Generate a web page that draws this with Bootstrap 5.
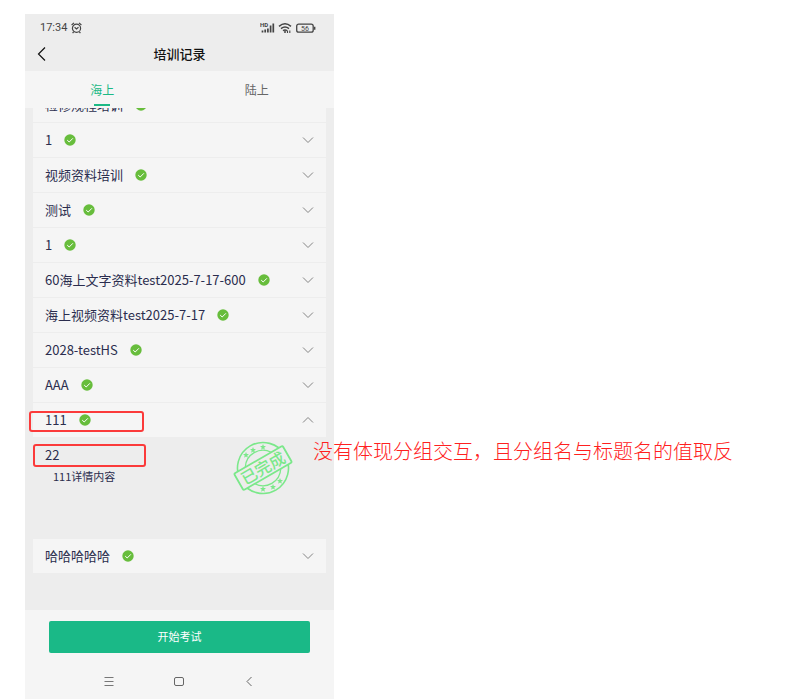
<!DOCTYPE html>
<html lang="zh-CN">
<head>
<meta charset="utf-8">
<meta name="viewport" content="width=device-width, initial-scale=1">
<title>培训记录</title>
<link href="https://cdn.jsdelivr.net/npm/bootstrap@5.3.0/dist/css/bootstrap.min.css" rel="stylesheet">
<style>
body{font-family:"Noto Sans CJK SC",sans-serif;background:#fff;color:#2b2d4e;font-size:12px;line-height:18px}
.page{min-height:100vh;padding:14px 25px 0}
.phone{max-width:309px;min-height:calc(100vh - 14px);background:#ededed}
.status{height:28px;padding:0 18px 0 15px;font-family:Roboto,sans-serif;font-size:11px;color:#444}
.title-bar{height:29px;padding-bottom:6px}
.title-bar h1{font-size:13px;line-height:20px;color:#111;font-weight:500}
.back{left:10px;top:2px;line-height:0}
.tabs{height:37px;background:#f5f5f5}
.tabs .nav-link{display:flex;flex-direction:column;align-items:center;justify-content:flex-start;color:#666;font-size:12px;line-height:18px;padding:10px 0 0;border:0;border-radius:0;background:none;height:37px}
.tabs .nav-link.active{color:#1cb985;background:none}
.tabs .nav-link.active::after{content:"";width:16px;height:2px;margin-top:5px;background:#1cb985}
.records{padding:0 8px}
.clip-top{height:15px}
.record{height:35px;padding:0 12px;background:#f5f5f5;color:#2b2d4e;border:0;border-bottom:1px solid #ededed;font-size:13px;line-height:20px}
.record .tick{margin-left:12px}
.detail{height:101px;padding:7px 12px}
.detail h2{font-size:13px;line-height:20px;font-weight:400}
.detail p{font-size:11px;line-height:18px;padding:2px 8px}
.stamp{right:32px;top:1px}
.mark-box{border:2px solid #fb3a3a;border-radius:3px;pointer-events:none}
.mark-group{left:-4px;top:8px;width:115px;height:21px}
.mark-title{left:0;top:6px;width:113px;height:23px}
.note{left:280px;top:0;font-size:20px;line-height:26px;font-weight:300;color:#ff2020;white-space:nowrap}
.footer-bar{background:#f5f5f5;padding:11px 24px 0;height:89px}
.start{height:32px;background:#1ab987;color:#fff;font-size:11px;line-height:16px;border:0;border-radius:2px;padding:0 0 2px}
.start:hover{background:#15a577;color:#fff}
.sys{height:55px;padding:0 55px 0 54px}
.sys button{line-height:0}
</style>
<script src="https://cdn.jsdelivr.net/npm/bootstrap@5.3.0/dist/js/bootstrap.bundle.min.js"></script>
</head>
<body>
<svg width="0" height="0" class="position-absolute" aria-hidden="true">
<symbol id="tick" viewBox="0 0 12 12"><circle cx="6" cy="6" r="5.7" fill="#67bd3c"/><path d="M3.2 6.1l2 1.9 3.7-3.7" fill="none" stroke="#fff" stroke-width="1"/></symbol>
<symbol id="down" viewBox="0 0 12 8"><path d="M1 1.500l5 5 5-5" fill="none" stroke="#858585" stroke-width="1"/></symbol>
<symbol id="up" viewBox="0 0 12 8"><path d="M1 6.500l5-5 5 5" fill="none" stroke="#858585" stroke-width="1"/></symbol>
<symbol id="star" viewBox="-5 -5 10 10"><path d="M0-5L1.4-1.6 5-1.5 2.2.8 3.1 4.4 0 2.4-3.1 4.4-2.2.8-5-1.5-1.4-1.6z" fill="#7be88a"/></symbol>
</svg>
<div class="page">
<main class="phone d-flex flex-column">
  <div class="status d-flex align-items-center">
    <span>17:34</span>
    <svg class="ms-1" width="11" height="12" viewBox="0 0 11 12" fill="none" stroke="#444" stroke-width="1.200" aria-hidden="true"><circle cx="5.5" cy="6.2" r="4.1"/><path d="M.6 3L3 .9M10.4 3L8 .9M2.6 9.8l-1 1.3M8.4 9.8l1 1.3M3.6 5.3l1.9 1.6 2-1.6"/></svg>
    <svg class="ms-auto" width="56" height="12" viewBox="0 0 56 12" aria-hidden="true">
      <text x="0" y="5" font-family="Roboto" font-size="6" font-weight="700" fill="#444">HD</text>
      <path d="M2.5 10.5v-2M5.2 10.5v-3M7.900 10.5v-4M10.6 10.5v-7M13.3 10.5v-9" stroke="#444" stroke-width="1.7"/>
      <g fill="none" stroke="#444" stroke-width="1.5"><path d="M19 4.3q6-5 12 0M21 6.6q4-3.2 8 0M23 8.700q2-1.6 4 0"/></g><circle cx="25" cy="10" r="1" fill="#444"/><path d="M27.5 8.5v2.5M29.8 11V8.5" stroke="#444" stroke-width="1.1"/>
      <rect x="36.7" y="2.2" width="16.5" height="8" rx="2" fill="none" stroke="#444" stroke-width="1.3"/><path d="M54.7 4.7v3" stroke="#444" stroke-width="1.4"/>
      <text x="45" y="8.8" text-anchor="middle" font-family="Roboto" font-size="7" fill="#444">56</text>
    </svg>
  </div>
  <header class="title-bar position-relative d-flex align-items-center justify-content-center">
    <button class="back btn p-0 border-0 position-absolute" aria-label="返回"><svg width="12" height="20" viewBox="0 0 12 20"><path d="M10 3.5L3.5 10l6.5 6.5" fill="none" stroke="#111" stroke-width="1.2"/></svg></button>
    <h1 class="m-0">培训记录</h1>
  </header>
  <nav class="tabs nav nav-justified" aria-label="培训类型">
    <button class="nav-link active" aria-current="true">海上</button>
    <button class="nav-link">陆上</button>
  </nav>
  <div class="records">
    <div class="clip-top overflow-hidden d-flex align-items-end"><button class="record d-flex align-items-center w-100"><span>检修规程培训</span><svg class="tick" width="12" height="12"><use href="#tick"/></svg><svg class="ms-auto" width="12" height="8"><use href="#down"/></svg></button></div>
    <button class="record d-flex align-items-center w-100"><span>1</span><svg class="tick" width="12" height="12"><use href="#tick"/></svg><svg class="ms-auto" width="12" height="8"><use href="#down"/></svg></button>
    <button class="record d-flex align-items-center w-100"><span>视频资料培训</span><svg class="tick" width="12" height="12"><use href="#tick"/></svg><svg class="ms-auto" width="12" height="8"><use href="#down"/></svg></button>
    <button class="record d-flex align-items-center w-100"><span>测试</span><svg class="tick" width="12" height="12"><use href="#tick"/></svg><svg class="ms-auto" width="12" height="8"><use href="#down"/></svg></button>
    <button class="record d-flex align-items-center w-100"><span>1</span><svg class="tick" width="12" height="12"><use href="#tick"/></svg><svg class="ms-auto" width="12" height="8"><use href="#down"/></svg></button>
    <button class="record d-flex align-items-center w-100"><span>60海上文字资料test2025-7-17-600</span><svg class="tick" width="12" height="12"><use href="#tick"/></svg><svg class="ms-auto" width="12" height="8"><use href="#down"/></svg></button>
    <button class="record d-flex align-items-center w-100"><span>海上视频资料test2025-7-17</span><svg class="tick" width="12" height="12"><use href="#tick"/></svg><svg class="ms-auto" width="12" height="8"><use href="#down"/></svg></button>
    <button class="record d-flex align-items-center w-100"><span>2028-testHS</span><svg class="tick" width="12" height="12"><use href="#tick"/></svg><svg class="ms-auto" width="12" height="8"><use href="#down"/></svg></button>
    <button class="record d-flex align-items-center w-100"><span>AAA</span><svg class="tick" width="12" height="12"><use href="#tick"/></svg><svg class="ms-auto" width="12" height="8"><use href="#down"/></svg></button>
    <div class="position-relative">
      <button class="record d-flex align-items-center w-100" data-bs-toggle="collapse" data-bs-target="#detail" aria-expanded="true" aria-controls="detail"><span>111</span><svg class="tick" width="12" height="12"><use href="#tick"/></svg><svg class="ms-auto" width="12" height="8"><use href="#up"/></svg></button>
      <div class="mark-box mark-group position-absolute"></div>
    </div>
    <div class="collapse show" id="detail">
      <div class="detail position-relative">
        <h2 class="m-0">22</h2>
        <p class="m-0">111详情内容</p>
        <svg class="stamp position-absolute" width="62" height="58" viewBox="0 0 62 58" role="img" aria-label="已完成">
          <g transform="translate(31 29) rotate(-30)">
            <g fill="none" stroke="#7be88a" stroke-width="1.6"><circle r="25.5"/><path d="M-15-9.500A17.800 17.800 0 0 1 15-9.500M-15 9.500A17.800 17.800 0 0 0 15 9.500" stroke-width="1.3"/></g>
            <rect x="-28" y="-9.5" width="56" height="19" rx="1.5" fill="#ededed" stroke="#7be88a" stroke-width="1.8"/>
            <text y="6" text-anchor="middle" font-family="Noto Sans CJK SC" font-size="16" font-weight="500" fill="#7be88a">已完成</text>
          </g>
          <use href="#star" x="11" y="13" width="6" height="6"/><use href="#star" x="18" y="8" width="6" height="6"/><use href="#star" x="28" y="5" width="6" height="6"/>
          <use href="#star" x="28" y="47" width="6" height="6"/><use href="#star" x="38" y="45" width="6" height="6"/><use href="#star" x="45" y="39" width="6" height="6"/>
        </svg>
        <div class="mark-box mark-title position-absolute"></div>
        <div class="note position-absolute">没有体现分组交互，且分组名与标题名的值取反</div>
      </div>
    </div>
    <button class="record d-flex align-items-center w-100"><span>哈哈哈哈哈</span><svg class="tick" width="12" height="12"><use href="#tick"/></svg><svg class="ms-auto" width="12" height="8"><use href="#down"/></svg></button>
  </div>
  <footer class="footer-bar mt-auto">
    <button class="start btn w-100">开始考试</button>
    <div class="sys d-flex align-items-center justify-content-between">
      <button class="btn p-0 border-0" aria-label="菜单"><svg width="12" height="12" viewBox="0 0 12 12"><path d="M1.5 2.5h9M1.5 6.5h9M1.5 10.5h9" stroke="#777"/></svg></button>
      <button class="btn p-0 border-0" aria-label="主页"><svg width="12" height="12" viewBox="0 0 12 12"><rect x="1.5" y="2.5" width="9" height="8" rx="1.5" fill="none" stroke="#666"/></svg></button>
      <button class="btn p-0 border-0" aria-label="后退"><svg width="12" height="12" viewBox="0 0 12 12"><path d="M8.5 2L4 6.5 8.5 11" fill="none" stroke="#666"/></svg></button>
    </div>
  </footer>
</main>
</div>
</body>
</html>
